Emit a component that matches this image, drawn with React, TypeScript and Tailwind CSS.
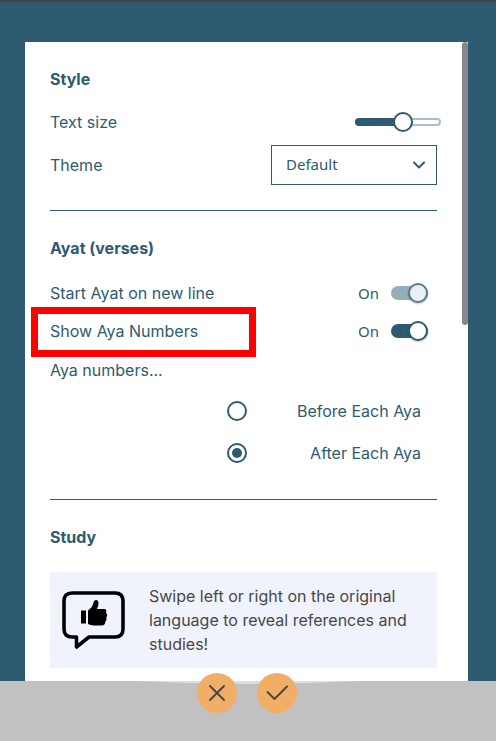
import { useState } from "react";
import type { ReactNode } from "react";

function Heading({ children }: { children: ReactNode }) {
  return <h2 className="text-base leading-6 font-bold">{children}</h2>;
}

function Toggle({ id, disabled = false }: { id: string; disabled?: boolean }) {
  const [on, setOn] = useState(true);
  return (
    <div className="mr-[9px] flex items-center gap-3">
      <span className="font-['Noto_Sans',sans-serif] text-[15px] leading-5">{on ? "On" : "Off"}</span>
      <input
        id={id}
        type="checkbox"
        role="switch"
        checked={on}
        disabled={disabled}
        onChange={(e) => setOn(e.target.checked)}
        className="relative h-3.5 w-[37px] appearance-none rounded-full bg-[#2e5b71] before:absolute before:-top-[3px] before:right-0 before:size-5 before:rounded-full before:border-2 before:border-[#2e5b71] before:bg-white before:shadow-[0_1px_2px_rgba(0,0,0,0.25)] not-checked:before:right-[17px] disabled:bg-[#97adb8] disabled:before:border-[#587c8d] disabled:before:bg-[#eaeff1]"
      />
    </div>
  );
}

function RadioRow({
  label,
  checked,
  onSelect,
}: {
  label: string;
  checked: boolean;
  onSelect: () => void;
}) {
  return (
    <label className="mr-4 ml-auto flex h-[42px] w-[194px] items-center justify-between">
      <input
        type="radio"
        name="aya-position"
        checked={checked}
        onChange={onSelect}
        className="flex size-5 appearance-none items-center justify-center rounded-full border-2 border-[#2e5b71] bg-white before:size-2.5 before:rounded-full checked:before:bg-[#2e5b71]"
      />
      <span>{label}</span>
    </label>
  );
}

export default function App() {
  const [size, setSize] = useState(58);
  const [position, setPosition] = useState("after");

  return (
    <div className="flex h-screen flex-col overflow-hidden border-t-2 border-[#474344] bg-[#2e5b71] font-['Inter',sans-serif] text-base leading-6 text-[#2e5b71]">
      <main className="relative mt-10 mr-7 ml-[25px] min-h-0 flex-1 overflow-hidden bg-white pt-[25px] pr-[31px] pl-[25px]">
        <div className="absolute top-0 right-0 h-[283px] w-1.5 rounded-full bg-[#888]" />

        <section className="border-b border-[#2e5b71] pb-[25px]">
          <Heading>Style</Heading>
          <div className="mt-2 flex h-[46px] items-center justify-between">
            <label htmlFor="text-size">Text size</label>
            <input
              id="text-size"
              type="range"
              min={0}
              max={100}
              value={size}
              onChange={(e) => setSize(Number(e.target.value))}
              style={{
                backgroundImage: `linear-gradient(to right, #2e5b71 ${size}%, #ffffff ${size}%)`,
              }}
              className="-mr-1 h-2 w-[86px] appearance-none rounded-full border-2 border-[#2e5b71]/40 [background-origin:border-box] [&::-webkit-slider-thumb]:size-5 [&::-webkit-slider-thumb]:appearance-none [&::-webkit-slider-thumb]:rounded-full [&::-webkit-slider-thumb]:border-2 [&::-webkit-slider-thumb]:border-[#2e5b71] [&::-webkit-slider-thumb]:bg-white"
            />
          </div>
          <div className="flex items-center justify-between">
            <label htmlFor="theme">Theme</label>
            <div className="relative">
              <select
                id="theme"
                className="block h-10 w-[166px] appearance-none border border-[#2e5b71] bg-white pr-8 pb-0.5 pl-3.5 font-['Noto_Sans',sans-serif] text-[15px]"
              >
                <option>Default</option>
                <option>Dark</option>
              </select>
              <svg
                className="pointer-events-none absolute top-4 right-3 h-2 w-3"
                viewBox="0 0 12 8"
                fill="none"
                stroke="currentColor"
                strokeWidth="2"
                strokeLinecap="round"
                strokeLinejoin="round"
              >
                <path d="M1 1.5 6 6.5 11 1.5" />
              </svg>
            </div>
          </div>
        </section>

        <section className="border-b border-[#2e5b71] py-[25px]">
          <Heading>Ayat (verses)</Heading>
          <div className="mt-3.5 flex h-[38px] items-center justify-between">
            <label htmlFor="new-line">Start Ayat on new line</label>
            <Toggle id="new-line" disabled />
          </div>
          <div className="relative flex h-[38px] items-center justify-between">
            <div className="pointer-events-none absolute -top-[5px] -left-[19px] h-[50px] w-[225px] border-7 border-[#ff0000]" />
            <label htmlFor="show-numbers">Show Aya Numbers</label>
            <Toggle id="show-numbers" />
          </div>
          <fieldset>
            <legend className="flex h-10 items-center">Aya numbers...</legend>
            <RadioRow
              label="Before Each Aya"
              checked={position === "before"}
              onSelect={() => setPosition("before")}
            />
            <RadioRow
              label="After Each Aya"
              checked={position === "after"}
              onSelect={() => setPosition("after")}
            />
          </fieldset>
        </section>

        <section className="pt-[25px]">
          <Heading>Study</Heading>
          <div className="mt-[23px] flex items-center gap-6 bg-[#f1f3fc] py-3 pr-5 pl-3 text-[#474747]">
            <svg className="h-[60px] w-[63px] shrink-0" viewBox="0 0 63 60" aria-hidden="true">
              <path
                d="M10 3H53Q61 3 61 11V39Q61 47 53 47H27L14.500 57V47H10Q2 47 2 39V11Q2 3 10 3Z"
                fill="none"
                stroke="#000"
                strokeWidth="3.600"
                strokeLinejoin="round"
              />
              <path d="M19 20.500h5v13h-5Z" fill="#000" />
              <path
                d="M26 20.500C29 18.500 31 15.500 31.500 12.500C32 9 36.500 9 36.500 13C36.500 15.500 35.500 17.500 35 19H42.500C44.500 19 44.500 21.500 44 23C45.500 24 45.500 26 44.300 27.500C45 29 44.500 30.500 43.300 31.500C43.500 34 42 35.500 39.500 35.500H32C29.500 35.500 27.500 34.500 26 34Z"
                fill="#000"
              />
            </svg>
            <p>Swipe left or right on the original language to reveal references and studies!</p>
          </div>
        </section>
      </main>

      <footer className="relative h-[60px] shrink-0 bg-[#c1c1c1]">
        <svg
          className="absolute top-0 left-1/2 h-1 w-[220px] -translate-x-1/2"
          viewBox="0 0 220 4"
          aria-hidden="true"
        >
          <path d="M0 0H220Q165 3 110 3Q55 3 0 0Z" fill="#dedede" />
        </svg>
        <div className="relative -mt-2 mr-0.5 flex justify-center gap-5">
          <button
            type="button"
            aria-label="Cancel"
            className="flex size-10 items-center justify-center rounded-full bg-[#f1ae67] text-[#474344]"
          >
            <svg width="16" height="16" viewBox="0 0 16 16" fill="none" stroke="currentColor" strokeWidth="1.8" strokeLinecap="round">
              <path d="M1 1 15 15M15 1 1 15" />
            </svg>
          </button>
          <button
            type="button"
            aria-label="Confirm"
            className="flex size-10 items-center justify-center rounded-full bg-[#f1ae67] text-[#474344]"
          >
            <svg width="22" height="16" viewBox="0 0 22 16" fill="none" stroke="currentColor" strokeWidth="1.8" strokeLinecap="round" strokeLinejoin="round">
              <path d="M1.500 7 8.500 14 21 1.500" />
            </svg>
          </button>
        </div>
      </footer>
    </div>
  );
}
